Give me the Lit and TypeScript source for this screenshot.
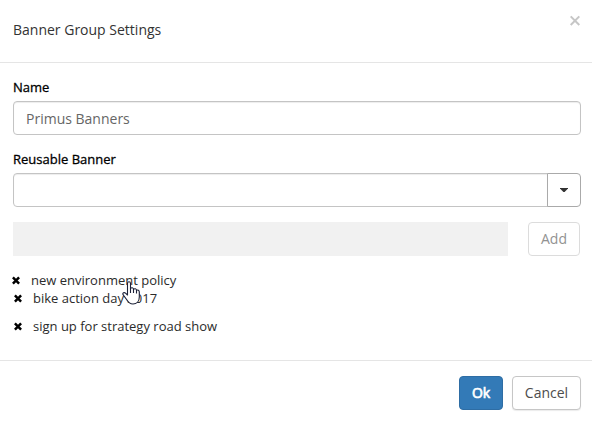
import { LitElement, html, css } from "lit";
import { customElement, state } from "lit/decorators.js";
import { classMap } from "lit/directives/class-map.js";

interface BannerItem {
  label: string;
  dragging?: boolean;
  spaced?: boolean;
}

@customElement("app-root")
export class AppRoot extends LitElement {
  static styles = css`
    :host {
      display: block;
      position: relative;
      width: 592px;
      height: 423px;
      overflow: hidden;
      background: #fff;
      color: #333;
      font: 14px/20px "Open Sans", sans-serif;
    }
    * { box-sizing: border-box; }
    button, input { font: inherit; margin: 0; outline: none; }
    header {
      display: flex;
      justify-content: space-between;
      height: 63px;
      padding: 20px 11px 0 13px;
      border-bottom: 1px solid #e5e5e5;
    }
    h1 { margin: 0; font: inherit; color: #333; }
    .close {
      width: 12px;
      height: 12px;
      padding: 0;
      margin-top: -5px;
      border: 0;
      background: none;
    }
    svg { display: block; }
    main {
      height: 297px;
      padding: 14px 11px 0 13px;
    }
    label {
      display: block;
      height: 20px;
      margin-bottom: 4px;
      font-size: 13px;
      color: #000;
      -webkit-text-stroke: 0.3px #000;
    }
    .field {
      display: block;
      width: 100%;
      height: 34px;
      padding: 0 12px;
      border: 1px solid #c4c4c4;
      border-radius: 4px;
      background: #fff;
      box-shadow: inset 0 1px 1px rgba(0, 0, 0, 0.075);
      color: #666;
    }
    .group { margin-bottom: 14px; }
    .combo { display: flex; margin-bottom: 15px; }
    .combo .field { flex: 1; border-radius: 4px 0 0 4px; }
    .toggle {
      display: grid;
      place-items: center;
      width: 34px;
      height: 34px;
      margin-left: -1px;
      padding: 0;
      border: 1px solid #aaa;
      border-radius: 0 4px 4px 0;
      background: #fff;
    }
    .add-row { display: flex; gap: 20px; padding-right: 1px; }
    .preview { flex: 1; height: 34px; background: #f1f1f1; }
    .btn {
      height: 34px;
      padding: 0;
      border: 1px solid #c6c6c6;
      border-radius: 4px;
      background: #fff;
      color: #4c4c4c;
      text-align: center;
    }
    .add { width: 52px; border-color: #dcdcdc; color: #929292; }
    ul { margin: 15px 0 0; padding: 0; list-style: none; }
    li {
      display: flex;
      align-items: center;
      gap: 10px;
      height: 18px;
      font-size: 13px;
      line-height: 18px;
      color: #2b2b2b;
    }
    .dragging { margin-left: -2px; }
    .spaced { margin-top: 10px; }
    footer {
      display: flex;
      justify-content: flex-end;
      gap: 9px;
      height: 63px;
      padding: 15px 11px 0;
      border-top: 1px solid #e5e5e5;
    }
    .ok {
      width: 44px;
      border-color: #2e6da4;
      background: #337ab7;
      color: #fff;
      -webkit-text-stroke: 0.7px #fff;
    }
    .cancel { width: 69px; box-shadow: 0 1px 1px rgba(0, 0, 0, 0.08); }
    .pointer { position: absolute; left: 122px; top: 281px; }
  `;

  @state() private items: BannerItem[] = [
    { label: "new environment policy", dragging: true },
    { label: "bike action day 2017" },
    { label: "sign up for strategy road show", spaced: true },
  ];

  private renderItem(item: BannerItem) {
    return html`<li class=${classMap({ dragging: !!item.dragging, spaced: !!item.spaced })}>
      <svg width="10" height="10" viewBox="0 0 10 10">
        <path d="M1.9 2.4 8.1 8.6M8.1 2.4 1.9 8.6" stroke="#000" stroke-width="2.5" />
      </svg>
      <span>${item.label}</span>
    </li>`;
  }

  render() {
    return html`
      <header>
        <h1>Banner Group Settings</h1>
        <button class="close" aria-label="Close">
          <svg width="12" height="12" viewBox="0 0 12 12">
            <path d="M1.7 1.4 10.3 10M10.3 1.4 1.7 10" stroke="#c6c6c6" stroke-width="2" />
          </svg>
        </button>
      </header>
      <main>
        <div class="group">
          <label for="name">Name</label>
          <input id="name" class="field" .value=${"Primus Banners"} />
        </div>
        <label for="banner">Reusable Banner</label>
        <div class="combo">
          <input id="banner" class="field" />
          <button class="toggle" aria-label="Show banners">
            <svg width="8" height="4" viewBox="0 0 8 4"><path d="M0 0H8V.6L4.6 4H3.4L0 .6Z" fill="#333" /></svg>
          </button>
        </div>
        <div class="add-row">
          <div class="preview"></div>
          <button class="btn add">Add</button>
        </div>
        <ul>${this.items.map((item) => this.renderItem(item))}</ul>
      </main>
      <footer>
        <button class="btn ok">Ok</button>
        <button class="btn cancel">Cancel</button>
      </footer>
      <svg class="pointer" width="18" height="24" viewBox="0 0 18 24">
        <path
          d="M5.5 14V2.5C5.5 .2 8.5 .2 8.5 2.5V7.5C9.5 6.2 11.3 6.7 11.5 8.2C12.7 7.3 14.3 7.8 14.5 9.2C15.8 8.5 17.3 9.3 17.3 11V16C17.3 20.5 14.5 23 11 23C7.5 23 6 21 4.6 18.5L1 13.6C.3 12 2.2 11 3.5 12.1Z"
          fill="#fff" stroke="#1c2138" stroke-width="1.1" stroke-linejoin="round" />
        <path d="M8.5 7V12M11.5 8V12M14.5 9V12.5" fill="none" stroke="#1c2138" stroke-width="1.1" />
      </svg>
    `;
  }
}
